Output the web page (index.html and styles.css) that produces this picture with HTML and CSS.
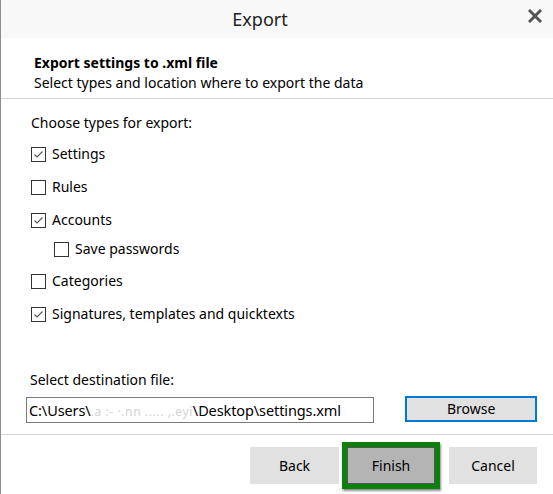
FILE: index.html
```html
<!DOCTYPE html>
<html>
<head>
<meta charset="utf-8">
<link rel="stylesheet" href="styles.css">
</head>
<body>
<div class="dialog">
  <div class="titlebar">
    <div class="title">Export</div>
    <div class="close">
      <svg width="14" height="14" viewBox="0 0 14 14"><path d="M2 2 L12 12 M12 2 L2 12" stroke="#555" stroke-width="3" stroke-linecap="square"/></svg>
    </div>
  </div>
  <div class="header">
    <div class="h-title">Export settings to .xml file</div>
    <div class="h-sub">Select types and location where to export the data</div>
  </div>
  <div class="body">
    <div class="label">Choose types for export:</div>
    <div class="row r1"><span class="cb checked"><svg width="13" height="13" viewBox="0 0 13 13"><path d="M2.5 6.5 L5 9 L10.5 3.5" fill="none" stroke="#555" stroke-width="1.1"/></svg></span>Settings</div>
    <div class="row"><span class="cb"></span>Rules</div>
    <div class="row"><span class="cb checked"><svg width="13" height="13" viewBox="0 0 13 13"><path d="M2.5 6.5 L5 9 L10.5 3.5" fill="none" stroke="#555" stroke-width="1.1"/></svg></span>Accounts</div>
    <div class="row sub"><span class="cb"></span>Save passwords</div>
    <div class="row"><span class="cb"></span>Categories</div>
    <div class="row"><span class="cb checked"><svg width="13" height="13" viewBox="0 0 13 13"><path d="M2.5 6.5 L5 9 L10.5 3.5" fill="none" stroke="#555" stroke-width="1.1"/></svg></span>Signatures, templates and quicktexts</div>
    <div class="spacer"></div>
    <div class="label dest">Select destination file:</div>
    <div class="filerow">
      <div class="input">C:\Users\<span class="blur">.a :- ·.nn ..... ,.eyi</span>\Desktop\settings.xml</div>
      <div class="browse">Browse</div>
    </div>
  </div>
  <div class="footer">
    <div class="btn back">Back</div>
    <div class="finish-wrap"><div class="btn finish">Finish</div></div>
    <div class="btn cancel">Cancel</div>
  </div>
</div>
</body>
</html>
```
FILE: styles.css
```css
html, body {
  margin: 0;
  padding: 0;
  background: #ffffff;
}
body {
  font-family: "Noto Sans", "Open Sans", sans-serif;
  font-size: 14px;
  color: #000;
}
.dialog {
  width: 552px;
  height: 494px;
  border-left: 1px solid #8c8c8c;
  display: flex;
  flex-direction: column;
  overflow: hidden;
}
.titlebar {
  height: 38px;
  background: #f8f8f8;
  display: flex;
  align-items: center;
  flex: none;
}
.title {
  flex: 1;
  text-align: center;
  font-size: 18px;
  color: #222;
  padding-left: 2px;
}
.close {
  width: 36px;
  display: flex;
  justify-content: center;
  align-items: center;
  margin-top: -6px;
}
.header {
  height: 61px;
  border-bottom: 1px solid #d4d4d4;
  padding-left: 33px;
  padding-top: 15px;
  box-sizing: border-box;
  flex: none;
}
.h-title {
  font-weight: bold;
  line-height: 20px;
}
.h-sub {
  line-height: 20px;
}
.body {
  height: 336px;
  border-bottom: 1px solid #d4d4d4;
  padding: 14px 16px 0 30px;
  box-sizing: border-box;
  display: flex;
  flex-direction: column;
  flex: none;
}
.label {
  line-height: 20px;
}
.row {
  display: flex;
  align-items: center;
  line-height: 20px;
  margin-top: 13px;
}
.row.r1 {
  margin-top: 11px;
}
.row.sub {
  margin-top: 9px;
  padding-left: 23px;
}
.row.sub + .row {
  margin-top: 12px;
}
.cb {
  width: 13px;
  height: 13px;
  border: 1px solid #333;
  box-sizing: content-box;
  margin-right: 6px;
  display: inline-flex;
  background: #fff;
}
.cb svg {
  display: block;
}
.spacer {
  height: 46px;
}
.dest {
  margin-left: -1px;
}
.filerow {
  display: flex;
  align-items: flex-start;
  margin-top: 7px;
  margin-left: -5px;
}
.input {
  width: 345px;
  height: 24px;
  border: 1px solid #7a7a7a;
  line-height: 24px;
  padding-left: 2px;
  box-sizing: content-box;
  white-space: nowrap;
  font-size: 14.5px;
  letter-spacing: -0.1px;
}
.blur {
  color: #d2d2d2;
  font-size: 12px;
  letter-spacing: 0.6px;
}
.browse {
  margin-left: 31px;
  width: 128px;
  height: 22px;
  border: 2px solid #0078d7;
  background: #e1e1e1;
  text-align: center;
  line-height: 22px;
  margin-top: -1px;
}
.footer {
  flex: 1;
  display: flex;
  align-items: flex-start;
  padding-top: 12px;
  padding-left: 249px;
}
.btn {
  width: 89px;
  height: 37px;
  background: #e1e1e1;
  display: flex;
  justify-content: center;
  align-items: center;
  box-sizing: border-box;
}
.finish-wrap {
  margin-left: 3px;
  margin-top: -5px;
  border: 5px solid #0b800b;
  box-shadow: 1px 2px 2px rgba(0,0,0,0.45);
}
.btn.finish {
  width: 88px;
  background: #b4b4b4;
  border: 1px solid #555;
}
.btn.cancel {
  margin-left: 9px;
  width: 88px;
}
```
